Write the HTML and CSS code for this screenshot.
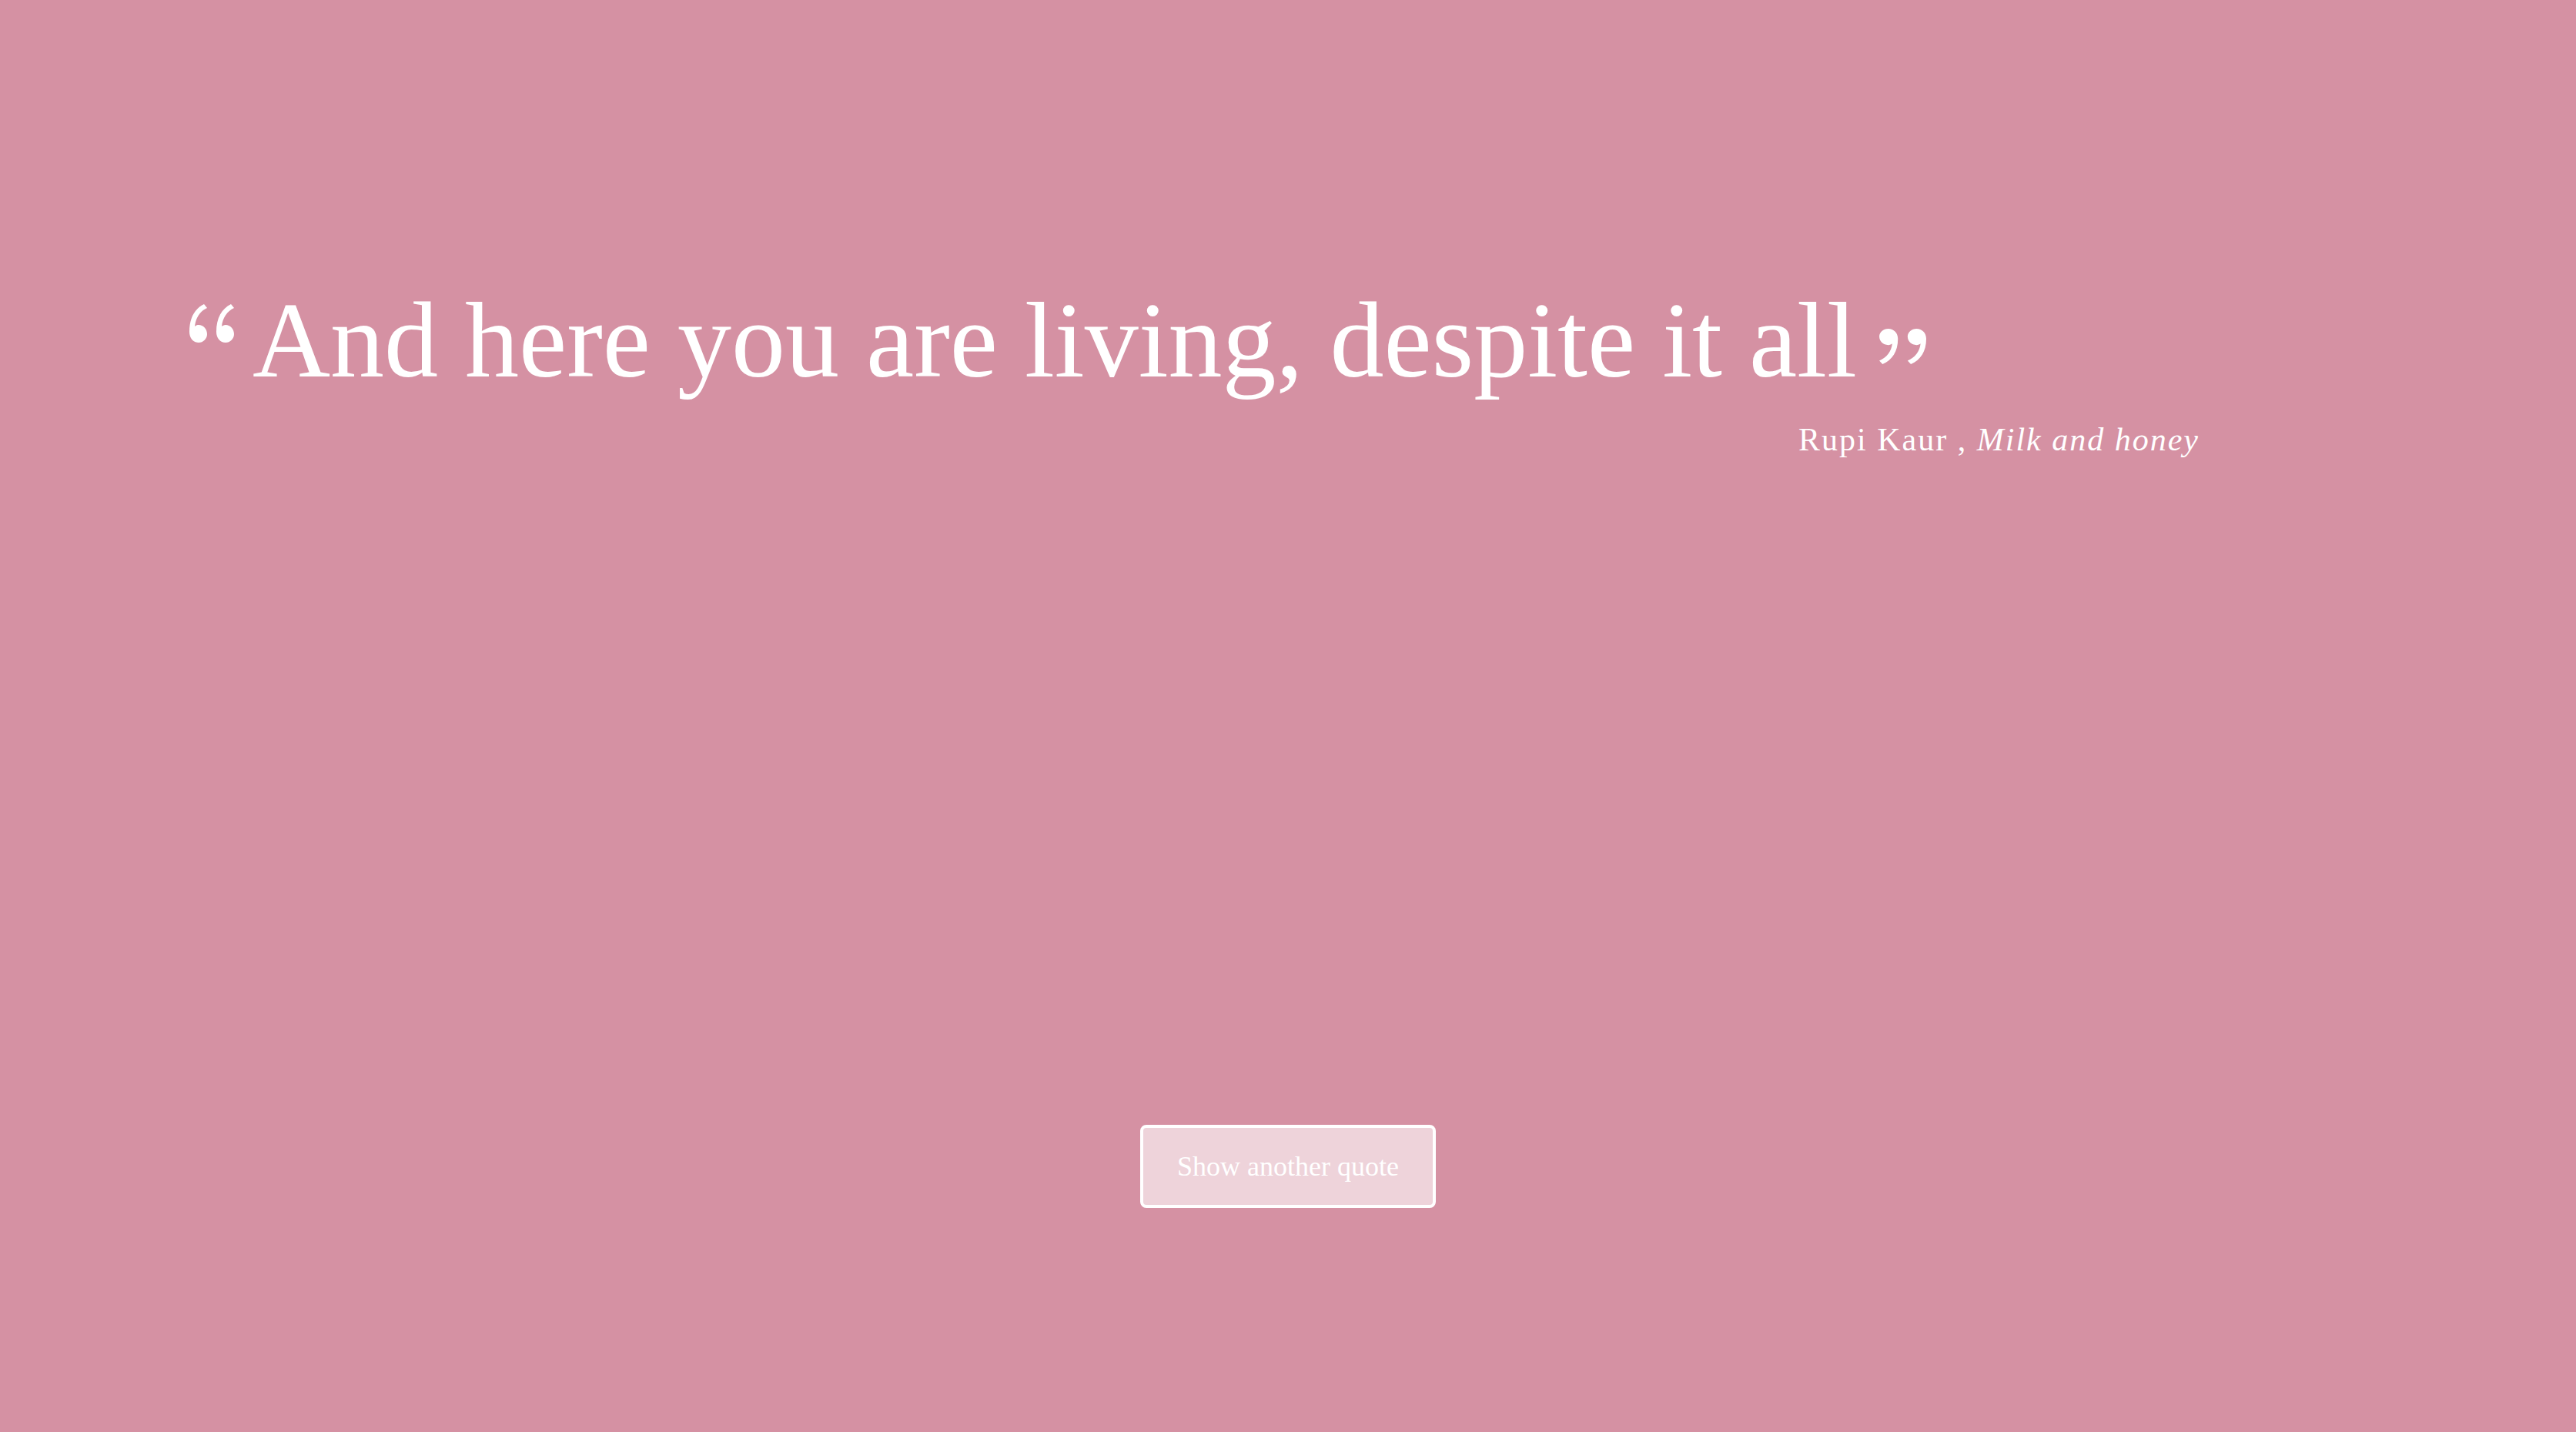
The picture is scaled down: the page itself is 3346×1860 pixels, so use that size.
FILE: index.html
```html
<!DOCTYPE html>
<html lang="en">
<head>
<meta charset="utf-8">
<title>Quote</title>
<link rel="stylesheet" href="styles.css">
</head>
<body>
<main class="page">
  <section class="quote-box">
    <blockquote class="quote">
      <svg class="mark mark-open" width="59" height="50" viewBox="0 0 59 50" aria-hidden="true">
        <path d="M19 0 C7 6 0 18 0 36 C0 44 5 50 12 50 C18 50 23 45 23 39 C23 32 18 27 12 27 C10 27 8 28 7 29 C8 18 14 9 23 5 Z" fill="#fff"/>
        <path d="M54 0 C42 6 35 18 35 36 C35 44 40 50 47 50 C53 50 58 45 58 39 C58 32 53 27 47 27 C45 27 43 28 42 29 C43 18 49 9 58 5 Z" fill="#fff"/>
      </svg><span class="text">And here you are living, despite it all</span><svg class="mark mark-close" width="62" height="46" viewBox="0 0 59 50" preserveAspectRatio="none" aria-hidden="true">
        <g transform="rotate(180 29.5 25)">
          <path d="M19 0 C7 6 0 18 0 36 C0 44 5 50 12 50 C18 50 23 45 23 39 C23 32 18 27 12 27 C10 27 8 28 7 29 C8 18 14 9 23 5 Z" fill="#fff"/>
          <path d="M54 0 C42 6 35 18 35 36 C35 44 40 50 47 50 C53 50 58 45 58 39 C58 32 53 27 47 27 C45 27 43 28 42 29 C43 18 49 9 58 5 Z" fill="#fff"/>
        </g>
      </svg>
    </blockquote>
    <p class="author">Rupi Kaur , <em class="book">Milk and honey</em></p>
  </section>
  <div class="actions">
    <button class="btn" type="button">Show another quote</button>
  </div>
</main>
</body>
</html>
```

FILE: styles.css
```css
html, body {
  margin: 0;
  padding: 0;
}

body {
  background: #d591a3;
  min-height: 100vh;
  font-family: "Liberation Serif", "Times New Roman", serif;
  color: #ffffff;
}

.page {
  display: flex;
  flex-direction: column;
  min-height: 100vh;
}

.quote-box {
  padding: 372px 489px 0 246px;
}

.quote {
  margin: 0;
  font-size: 140px;
  line-height: 1;
  white-space: nowrap;
}

.mark {
  display: inline-block;
}

.mark-open {
  vertical-align: 44px;
  margin-right: 23px;
}

.mark-close {
  vertical-align: 16px;
  margin-left: 28px;
}

.author {
  margin: 38px 0 0 0;
  text-align: right;
  font-size: 42px;
  line-height: 1;
  letter-spacing: 2px;
}

.book {
  font-style: italic;
}

.actions {
  display: flex;
  justify-content: center;
  margin-top: 869px;
}

.btn {
  font-family: "Liberation Serif", "Times New Roman", serif;
  font-size: 36px;
  line-height: 1;
  color: #ffffff;
  background: rgba(255, 255, 255, 0.6);
  border: 4px solid #ffffff;
  border-radius: 8px;
  padding: 32px 44px;
  cursor: pointer;
}
```
